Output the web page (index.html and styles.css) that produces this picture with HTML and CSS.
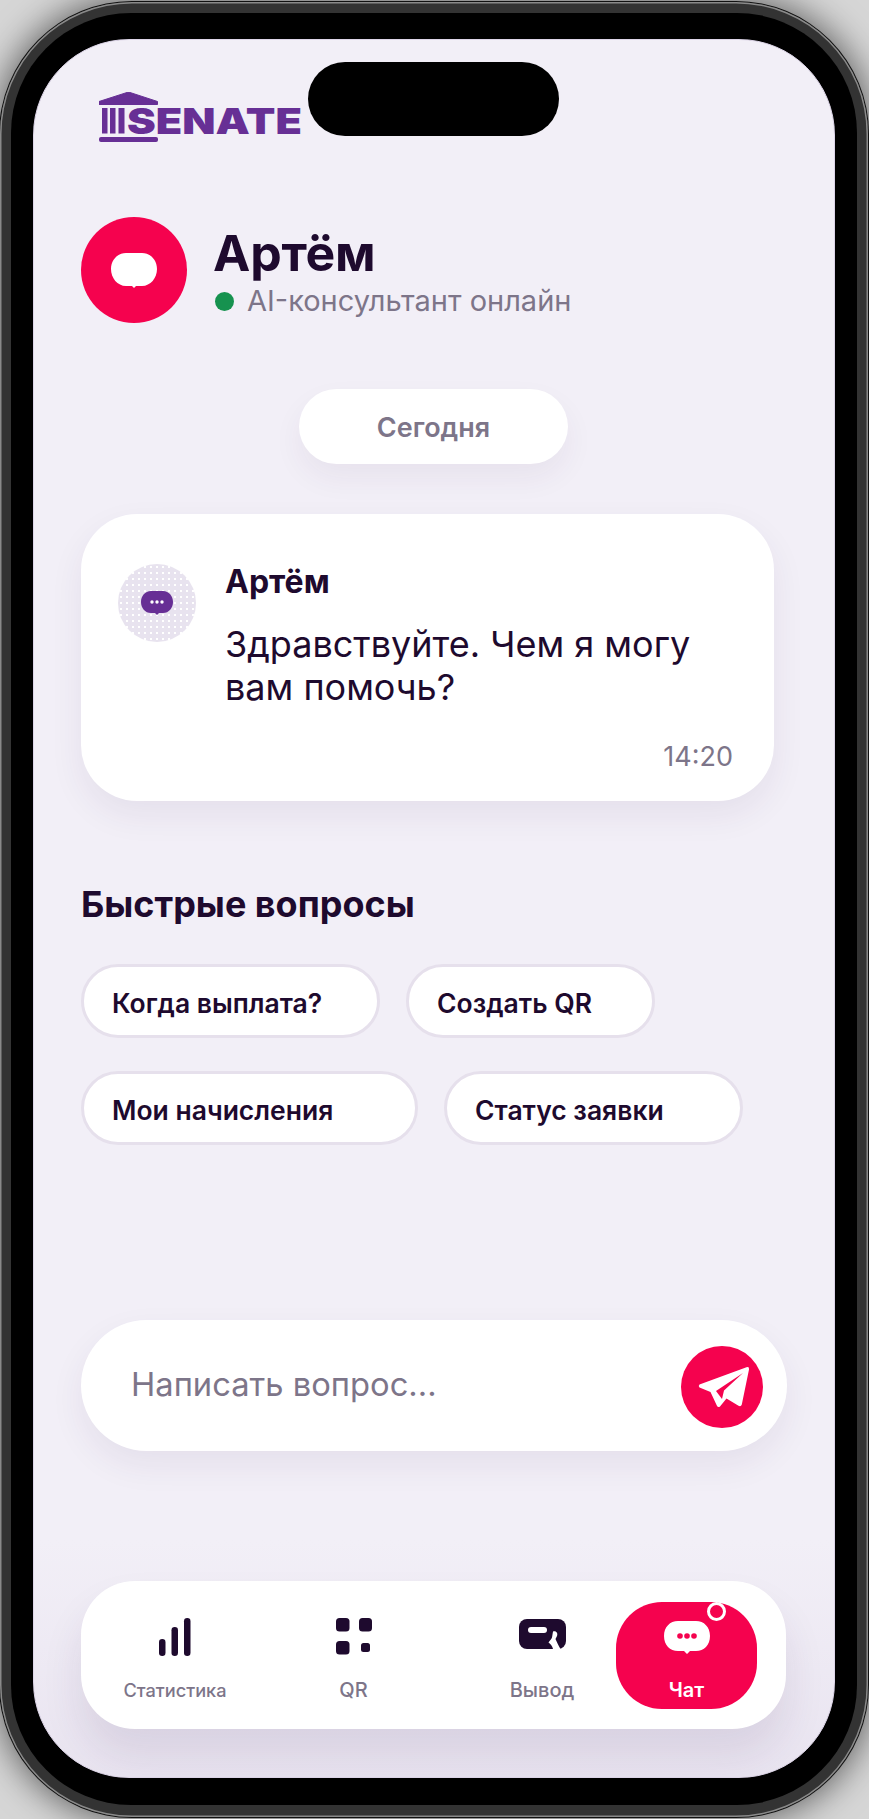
FILE: index.html
```html
<!DOCTYPE html>
<html lang="ru">
<head>
<meta charset="utf-8">
<title>Чат</title>
<link rel="stylesheet" href="styles.css">
</head>
<body>
<div class="device">
  <div class="bezel">
    <div class="glass">
      <div class="screen">
        <div class="island"></div>
        <svg class="logo" width="204" height="52" viewBox="0 0 204 52">
          <path d="M0 9.500 29.500 0 58.500 9.500V12.500H0Z" fill="#672f95" stroke="#672f95" stroke-linejoin="round"/>
          <rect x="3" y="16" width="5.500" height="25.500" fill="#672f95"/>
          <rect x="11" y="16" width="5.500" height="25.500" fill="#672f95"/>
          <rect x="19.500" y="16" width="6" height="25.500" fill="#672f95"/>
          <rect y="45" width="59" height="5" rx="2" fill="#672f95"/>
          <text class="logo-text" x="28" y="42" textLength="175" lengthAdjust="spacingAndGlyphs">SENATE</text>
        </svg>

        <header class="agent">
          <div class="agent-avatar">
            <svg width="46" height="35" viewBox="0 0 46 35"><path d="M15 0H31C39.500 0 46 7 46 16S39.500 33 31 33H25L23 35 21 33H15C6.500 33 0 25 0 16S6.500 0 15 0Z" fill="#fff"/></svg>
          </div>
          <div class="agent-info">
            <h1 class="agent-name">Артём</h1>
            <div class="agent-status"><span class="dot"></span>AI-консультант онлайн</div>
          </div>
        </header>

        <div class="date-row"><span class="date-pill">Сегодня</span></div>

        <article class="message">
          <div class="message-avatar">
            <svg width="32" height="24" viewBox="0 0 32 24"><path d="M10 0H22C28 0 32 5 32 11S28 22 22 22H18L16 24 14 22H10C4 22 0 17 0 11S4 0 10 0Z" fill="#672f95"/><circle cx="11" cy="11" r="1.700" fill="#fff"/><circle cx="16" cy="11" r="1.700" fill="#fff"/><circle cx="21" cy="11" r="1.700" fill="#fff"/></svg>
          </div>
          <div class="message-body">
            <div class="message-name">Артём</div>
            <p class="message-text">Здравствуйте. Чем я могу вам помочь?</p>
            <time class="message-time">14:20</time>
          </div>
        </article>

        <h2 class="quick-title">Быстрые вопросы</h2>
        <div class="chips">
          <button class="chip chip-a">Когда выплата?</button>
          <button class="chip chip-b">Создать QR</button>
          <button class="chip chip-c">Мои начисления</button>
          <button class="chip chip-d">Статус заявки</button>
        </div>

        <div class="composer">
          <span class="placeholder">Написать вопрос...</span>
          <span class="send">
            <svg width="82" height="82" viewBox="0 0 82 82"><path d="M18.500 38.500 65.500 21.200Q68.500 20.500 68 23.500L60.800 58.500Q60 61 57.500 59.800L45.500 52.500 39 60.500Q37 62 35.800 59.500L29.500 46 18.500 41.500Q17 40 18.500 38.500Z" fill="#fff"/><path d="M35 45 62 27 43 44.500 41 53Z" fill="#f5024e"/></svg>
          </span>
        </div>

        <nav class="tabbar">
          <a class="tab tab-stats">
            <svg class="tab-icon" width="32" height="38" viewBox="0 0 32 38"><rect y="21" width="6.500" height="17" rx="3.200" fill="#1e0a2e"/><rect x="12.500" y="9" width="6.500" height="29" rx="3.200" fill="#1e0a2e"/><rect x="25" width="6.500" height="38" rx="3.200" fill="#1e0a2e"/></svg>
            <span class="tab-label">Статистика</span>
          </a>
          <a class="tab tab-qr">
            <svg class="tab-icon" width="36" height="38" viewBox="0 0 36 38"><rect width="13.500" height="13.500" y="0" rx="3.500" fill="#1e0a2e"/><rect x="23" width="13" height="13.500" rx="3.500" fill="#1e0a2e"/><rect y="23" width="13.500" height="13.500" rx="3.500" fill="#1e0a2e"/><rect x="25" y="25" width="9" height="9" rx="2.500" fill="#1e0a2e"/></svg>
            <span class="tab-label tab-label-lg">QR</span>
          </a>
          <a class="tab tab-pay">
            <svg class="tab-icon" width="47" height="38" viewBox="0 0 47 38"><rect y="1" width="47" height="30" rx="8" fill="#1e0a2e"/><rect x="9" y="9" width="19" height="6" rx="3" fill="#fff"/><path d="M34 13.500C37.500 12.500 39 15.500 38 18L36.500 21C38 24 39.500 28 41.500 31H34C33.500 28 31.500 26 29.500 24.500 30.500 22.500 32.500 21.500 33 19.500Z" fill="#fff"/></svg>
            <span class="tab-label tab-label-lg">Вывод</span>
          </a>
          <a class="tab tab-chat">
            <span class="ring"></span>
            <svg class="tab-icon" width="46" height="34" viewBox="0 0 46 34"><path d="M14 0H32C40 0 46 6 46 15S40 30 32 30H26L23 33 20 30H14C6 30 0 24 0 15S6 0 14 0Z" fill="#fff"/><circle cx="16" cy="15" r="2.800" fill="#f5024e"/><circle cx="23" cy="15" r="2.800" fill="#f5024e"/><circle cx="30" cy="15" r="2.800" fill="#f5024e"/></svg>
            <span class="tab-label tab-label-lg">Чат</span>
          </a>
        </nav>
      </div>
    </div>
  </div>
</div>
</body>
</html>
```

FILE: styles.css
```css
* { box-sizing: border-box; }

html, body {
  margin: 0;
  padding: 0;
}

body {
  width: 869px;
  height: 1819px;
  overflow: hidden;
  font-family: Inter, "Noto Sans", sans-serif;
  color: #1e0a2e;
  background: #d6d6d6;
}

.device {
  padding: 2px 1px 2px 0;
  height: 1819px;
}

.bezel {
  height: 1815px;
  padding: 11px 11px 12px 11px;
  border-radius: 132px;
  background: #333;
  box-shadow: inset 0 0 0 1.5px #8a8a8a, 0 0 0 1px #111, 0 0 34px 4px rgba(0, 0, 0, .55);
}

.glass {
  height: 100%;
  padding: 26px 22px 25px 22px;
  border-radius: 120px;
  background: #000;
}

.screen {
  position: relative;
  height: 1739px;
  padding: 52px 47px 0 47px;
  border-radius: 96px;
  overflow: hidden;
  border: 1px solid #ddd5e8;
  background: linear-gradient(180deg, #f2eff7 0, #f2eff7 1500px, #e9e4f0 100%);
}

.island {
  position: absolute;
  left: 274px;
  top: 22px;
  width: 251px;
  height: 74px;
  border-radius: 37px;
  background: #000;
}

.logo {
  display: block;
  margin-left: 18px;
}

.logo-text {
  font-family: Inter, sans-serif;
  font-weight: 900;
  font-size: 36px;
  fill: #672f95;
}

.agent {
  display: flex;
  align-items: center;
  gap: 26px;
  margin-top: 73px;
}

.agent-avatar {
  width: 106px;
  height: 106px;
  flex: none;
  display: flex;
  align-items: center;
  justify-content: center;
  border-radius: 50%;
  background: #f5024e;
}

.agent-name {
  margin: 0;
  font-size: 50px;
  line-height: 60px;
  font-weight: 700;
  letter-spacing: -.2px;
}

.agent-status {
  display: flex;
  align-items: center;
  margin: 1px 0 -1px 2px;
  font-size: 29px;
  line-height: 34px;
  color: #7d7589;
}

.dot {
  width: 19px;
  height: 19px;
  margin-right: 13px;
  border-radius: 50%;
  background: #16924f;
}

.date-row {
  display: flex;
  margin-top: 66px;
  margin-left: 218px;
}

.date-pill {
  display: flex;
  align-items: center;
  justify-content: center;
  width: 269px;
  height: 75px;
  padding-top: 2px;
  border-radius: 38px;
  font-size: 27px;
  font-weight: 600;
  color: #7d7589;
  background: #fff;
  box-shadow: 0 14px 30px rgba(60, 30, 90, .06);
}

.message {
  display: flex;
  gap: 29px;
  width: 693px;
  height: 287px;
  margin-top: 50px;
  padding: 50px 41px 0 37px;
  border-radius: 56px;
  background: #fff;
  box-shadow: 0 14px 34px rgba(60, 30, 90, .07);
}

.message-avatar {
  width: 78px;
  height: 78px;
  flex: none;
  display: flex;
  align-items: center;
  justify-content: center;
  border-radius: 50%;
  background-color: #e8e3ef;
  background-image: radial-gradient(circle, #fff 0.9px, transparent 1.2px);
  background-size: 6px 6px;
}

.message-body {
  flex: 1;
  min-width: 0;
}

.message-name {
  margin-top: 0;
  font-size: 32px;
  line-height: 36px;
  font-weight: 700;
}

.message-text {
  margin: 23px 0 0;
  font-size: 36px;
  line-height: 43px;
}

.message-time {
  display: block;
  margin-top: 32px;
  text-align: right;
  font-size: 27px;
  line-height: 32px;
  color: #7d7589;
}

.quick-title {
  margin: 83px 0 0;
  font-size: 36px;
  line-height: 40px;
  font-weight: 700;
}

.chips {
  display: flex;
  flex-wrap: wrap;
  gap: 33px 26px;
  width: 693px;
  margin-top: 40px;
}

.chip {
  height: 74px;
  padding: 3px 0 0 28px;
  text-align: left;
  border: 3px solid #e6e0ec;
  border-radius: 37px;
  font-family: inherit;
  font-size: 26.500px;
  font-weight: 600;
  color: #1e0a2e;
  background: #fff;
}

.chip-a { width: 299px; }
.chip-b { width: 249px; }
.chip-c { width: 337px; }
.chip-d { width: 299px; }

.composer {
  display: flex;
  align-items: center;
  justify-content: space-between;
  width: 706px;
  height: 131px;
  margin-top: 175px;
  padding: 0 24px 0 50px;
  border-radius: 66px;
  background: #fff;
  box-shadow: 0 14px 34px rgba(60, 30, 90, .07);
}

.placeholder {
  margin-top: -4px;
  font-size: 32.700px;
  color: #7d7589;
}

.send {
  display: block;
  width: 82px;
  height: 82px;
  margin-top: 2px;
  border-radius: 50%;
  background: #f5024e;
}

.send svg { display: block; }

.tabbar {
  display: flex;
  width: 705px;
  height: 148px;
  margin-top: 130px;
  padding: 21px 0 0 13px;
  border-radius: 54px;
  background: #fff;
  box-shadow: 0 26px 40px rgba(60, 30, 90, .1);
}

.tab {
  display: flex;
  flex-direction: column;
  align-items: center;
  height: 107px;
}

.tab-icon {
  display: block;
  margin-top: 16px;
}

.tab-label {
  margin-top: 23px;
  font-size: 18.200px;
  line-height: 22px;
  font-weight: 500;
  color: #7d7589;
}

.tab-label-lg { font-size: 20px; }

.tab-stats { width: 162px; }
.tab-qr { width: 195px; }
.tab-pay { width: 148px; margin-left: 17px; }

.tab-chat {
  position: relative;
  width: 141px;
  border-radius: 46px;
  background: #f5024e;
}

.tab-chat .tab-icon { margin-top: 19px; }

.tab-chat .tab-label {
  margin-top: 24px;
  font-weight: 600;
  color: #fff;
}

.ring {
  position: absolute;
  right: 31px;
  top: 0;
  width: 19px;
  height: 19px;
  border: 3px solid #fff;
  border-radius: 50%;
  background: #f5024e;
}
```
